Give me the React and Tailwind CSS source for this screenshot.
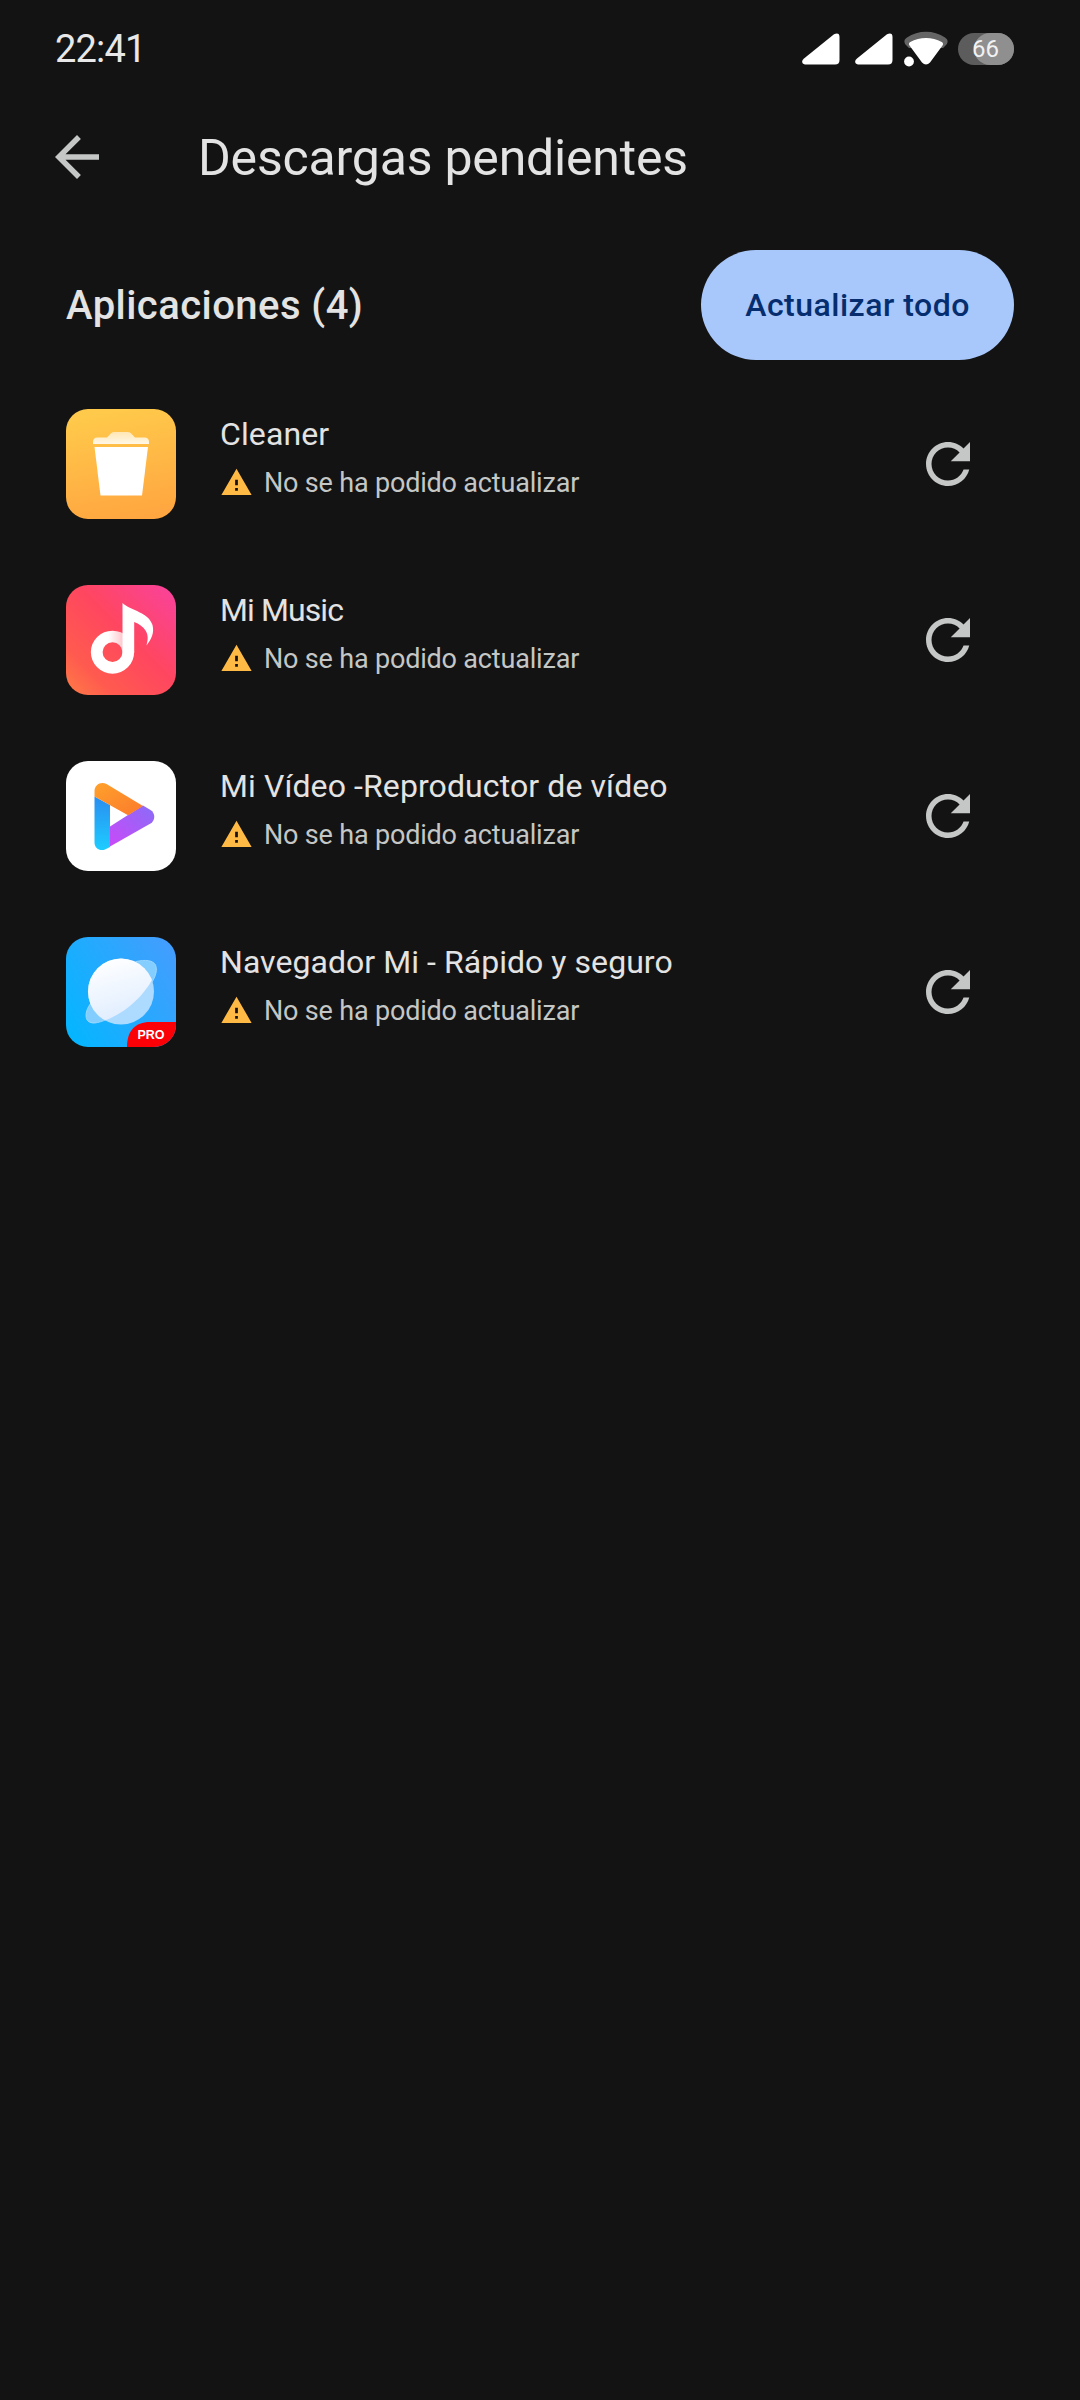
import React from 'react';

const CleanerIcon = () => (
  <svg viewBox="0 0 110 110" className="size-[110px]">
    <defs>
      <linearGradient id="cleaner-bg" x1="0.4" y1="0" x2="0.6" y2="1">
        <stop offset="0" stopColor="#ffca4b" />
        <stop offset="1" stopColor="#ffa640" />
      </linearGradient>
      <linearGradient id="cleaner-lid" x1="0" y1="0" x2="0" y2="1">
        <stop offset="0" stopColor="#ffe7b5" />
        <stop offset="1" stopColor="#fff7e6" />
      </linearGradient>
    </defs>
    <rect width="110" height="110" rx="22" fill="url(#cleaner-bg)" />
    <path d="M27 35v-2q0-4.500 4.500-4.500H41l4-4.200q1.500-1.300 3.500-1.300h13q2 0 3.500 1.300l4 4.200h9.500q4.500 0 4.500 4.500v2z" fill="url(#cleaner-lid)" />
    <path d="M28.500 38H82l-6 48.500H34.500z" fill="#fff" />
  </svg>
);

const MusicIcon = () => (
  <svg viewBox="0 0 110 110" className="size-[110px]">
    <defs>
      <linearGradient id="music-bg" x1="0" y1="1" x2="1" y2="0">
        <stop offset="0" stopColor="#ff7d45" />
        <stop offset="0.22" stopColor="#ff5a4f" />
        <stop offset="0.55" stopColor="#ff4660" />
        <stop offset="1" stopColor="#f9429f" />
      </linearGradient>
      <linearGradient id="music-fold" gradientUnits="userSpaceOnUse" x1="42" y1="0" x2="58" y2="0">
        <stop offset="0" stopColor="#fff" />
        <stop offset="1" stopColor="#ffc4c9" />
      </linearGradient>
    </defs>
    <rect width="110" height="110" rx="22" fill="url(#music-bg)" />
    <path d="M30.700 67.300a15.800 15.800 0 0 1 31.600 0" fill="none" stroke="url(#music-fold)" strokeWidth="11.700" />
    <path d="M30.700 67a15.800 15.800 0 0 0 31.600 0" fill="none" stroke="#fff" strokeWidth="11.700" />
    <path d="M56.500 18c9 8 26 9 30 22 2 8-1 14-6 20.500 1.500-6 2-10-1-15-2.500-4-6.500-6.500-11.300-8.500v30.500H56.500z" fill="#fff" />
  </svg>
);

const VideoIcon = () => (
  <svg viewBox="0 0 110 110" className="size-[110px]">
    <defs>
      <linearGradient id="video-orange" x1="0" y1="0" x2="1" y2="1">
        <stop offset="0" stopColor="#ffa12b" />
        <stop offset="1" stopColor="#fb7a2c" />
      </linearGradient>
      <linearGradient id="video-blue" x1="0" y1="0" x2="0" y2="1">
        <stop offset="0" stopColor="#2a8df0" />
        <stop offset="1" stopColor="#1dcdff" />
      </linearGradient>
      <linearGradient id="video-purple" x1="0" y1="1" x2="1" y2="0">
        <stop offset="0" stopColor="#c94af8" />
        <stop offset="1" stopColor="#8a6cf8" />
      </linearGradient>
    </defs>
    <rect width="110" height="110" rx="22" fill="#fff" />
    <path d="M28.500 35.500 44 44v42l-4.500 2.200c-5 2.500-11-.7-11-6.700z" fill="url(#video-blue)" />
    <path d="M44 65.500 62 54l15-9.500 7.500 4.500c5 3 5 10.500 0 13.500L44 85.500z" fill="url(#video-purple)" />
    <path d="M28.500 35.500V30c0-6.500 6.500-10 12-7L77 45l-15 9.200z" fill="url(#video-orange)" />
  </svg>
);

const BrowserIcon = () => (
  <svg viewBox="0 0 110 110" className="size-[110px]">
    <defs>
      <linearGradient id="browser-bg" x1="0" y1="0.8" x2="1" y2="0.2">
        <stop offset="0" stopColor="#06b5ff" />
        <stop offset="1" stopColor="#429efe" />
      </linearGradient>
      <linearGradient id="browser-planet" x1="0.3" y1="0" x2="0.6" y2="1">
        <stop offset="0" stopColor="#fff" />
        <stop offset="1" stopColor="#dcebff" />
      </linearGradient>
      <clipPath id="browser-clip">
        <rect width="110" height="110" rx="22" />
      </clipPath>
      <clipPath id="browser-half">
        <path d="M0 0H95L86.500 42C77 60 58 77 37.500 84L0 90z" />
      </clipPath>
    </defs>
    <g clipPath="url(#browser-clip)">
      <rect width="110" height="110" fill="url(#browser-bg)" />
      <path
        d="M70 24.500c9-2 17-1.500 19.500 3.500 3 6-1.500 17-11 27C64 71 43 84 29 86c-6 .5-9-2.500-9-7.500 0-6 4-12 9-18z"
        fill="#84ceff"
        stroke="#a8ddff"
        strokeWidth="0.800"
      />
      <circle cx="55" cy="54.500" r="33" fill="#addaff" />
      <circle cx="55" cy="54.500" r="33" fill="url(#browser-planet)" clipPath="url(#browser-half)" />
      <path d="M61 110c0-16 8-25 23-25h26v25z" fill="#fb0007" />
      <text x="85" y="102" textAnchor="middle" fontFamily="Liberation Sans, sans-serif" fontWeight="700" fontSize="12.500" fill="#fff">
        PRO
      </text>
    </g>
  </svg>
);

const SignalIcon = () => (
  <svg viewBox="0 0 38 32" className="h-8 w-[38px]">
    <path d="M4.500 31.500Q1 31.500 .3 29.500T2 25.500L32 1.200Q37.500-1 37.500 4v23q0 4.500-4.500 4.500z" fill="#fff" />
  </svg>
);

const WifiIcon = () => (
  <svg viewBox="0 0 44 36" className="h-9 w-11">
    <path d="M2 14C-.5 11 0 8.500 3 6.500c11-7.700 27-7.700 38 0 3 2 3.500 4.500 1 7.500l-3 3-34 0z" fill="#656565" />
    <path d="M5.500 14.500c-1-1.300-.8-2.500.8-3.500 9.500-5.500 21.900-5.500 31.400 0 1.600 1 1.800 2.200.8 3.500L26 31.500q-4 4-8 0z" fill="#fff" />
    <circle cx="5" cy="30.500" r="6" fill="#131313" />
    <circle cx="5" cy="30.500" r="4.900" fill="#fff" />
  </svg>
);

const ArrowBackIcon = () => (
  <svg viewBox="0 0 24 24" className="size-[66px]" fill="#c4c7c5">
    <path d="M20 11H7.830l5.590-5.590L12 4l-8 8 8 8 1.410-1.410L7.830 13H20v-2z" />
  </svg>
);

const WarningIcon = () => (
  <svg viewBox="0 0 24 24" className="size-[33px]" fill="#ffb945">
    <path d="M1 21h22L12 2 1 21zm12-3h-2v-2h2v2zm0-4h-2v-4h2v4z" />
  </svg>
);

const RetryIcon = () => (
  <svg viewBox="0 0 24 24" className="size-[66px]" fill="#c4c7c5">
    <path d="M17.650 6.350C16.200 4.900 14.210 4 12 4c-4.420 0-7.990 3.580-7.990 8s3.570 8 7.990 8c3.730 0 6.840-2.550 7.730-6h-2.080c-.82 2.330-3.040 4-5.650 4-3.310 0-6-2.690-6-6s2.690-6 6-6c1.660 0 3.140.69 4.220 1.780L13 11h7V4l-2.350 2.350z" />
  </svg>
);

const apps = [
  { name: 'Cleaner', Icon: CleanerIcon, spacing: 'tracking-[0.1px]' },
  { name: 'Mi Music', Icon: MusicIcon, spacing: 'tracking-[-0.900px]' },
  { name: 'Mi Vídeo -Reproductor de vídeo', Icon: VideoIcon, spacing: 'tracking-[0.1px]' },
  { name: 'Navegador Mi - Rápido y seguro', Icon: BrowserIcon, spacing: 'tracking-[0.05px]' },
];

const StatusBar = () => (
  <div className="flex h-[98px] items-center justify-between pr-[66px] pl-[55px]">
    <span className="text-[38px] leading-none tracking-[-0.800px] text-[#e8e8e8]">22:41</span>
    <div className="flex items-center">
      <SignalIcon />
      <span className="w-[15px]" />
      <SignalIcon />
      <span className="w-[11px]" />
      <WifiIcon />
      <div className="ml-2.5 flex h-8 w-14 justify-end rounded-full bg-[#5c5c5c]">
        <div className="relative h-8 w-10 rounded-full bg-[#8f8f8f]">
          <span className="absolute top-0 -left-0.5 text-2xl leading-8 text-[#f2f2f2]">66</span>
        </div>
      </div>
    </div>
  </div>
);

const AppRow = ({ name, Icon, spacing }) => (
  <li className="flex h-44 items-center pr-[99px] pl-[66px]">
    <Icon />
    <div className="ml-11 flex flex-1 flex-col pb-[11px]">
      <span className={`text-[32px] leading-[48px] whitespace-nowrap text-[#e3e3e3] ${spacing}`}>{name}</span>
      <div className="flex h-[50px] items-center">
        <WarningIcon />
        <span className="ml-[11px] text-[27px] leading-10 tracking-[-0.180px] whitespace-nowrap text-[#c4c7c5]">
          No se ha podido actualizar
        </span>
      </div>
    </div>
    <RetryIcon />
  </li>
);

export default function App() {
  return (
    <div className="h-[2400px] w-[1080px] overflow-hidden bg-[#131313] font-['Roboto',sans-serif]">
      <StatusBar />
      <header className="flex h-[118px] items-center pl-11">
        <ArrowBackIcon />
        <h1 className="ml-[88px] pt-0.5 text-[50px] leading-none tracking-[-0.200px] whitespace-nowrap text-[#e3e3e3]">
          Descargas pendientes
        </h1>
      </header>
      <div className="mt-[34px] flex h-[110px] items-center justify-between px-[66px]">
        <h2 className="pt-0.5 text-[40px] leading-none font-medium tracking-[0.450px] whitespace-nowrap text-[#e3e3e3]">
          Aplicaciones (4)
        </h2>
        <button className="h-[110px] w-[313px] rounded-full bg-[#a8c7fa] text-[32px] font-medium tracking-[0.500px] whitespace-nowrap text-[#062e6f]">
          Actualizar todo
        </button>
      </div>
      <ul className="mt-4">
        {apps.map(app => (
          <AppRow key={app.name} {...app} />
        ))}
      </ul>
    </div>
  );
}
